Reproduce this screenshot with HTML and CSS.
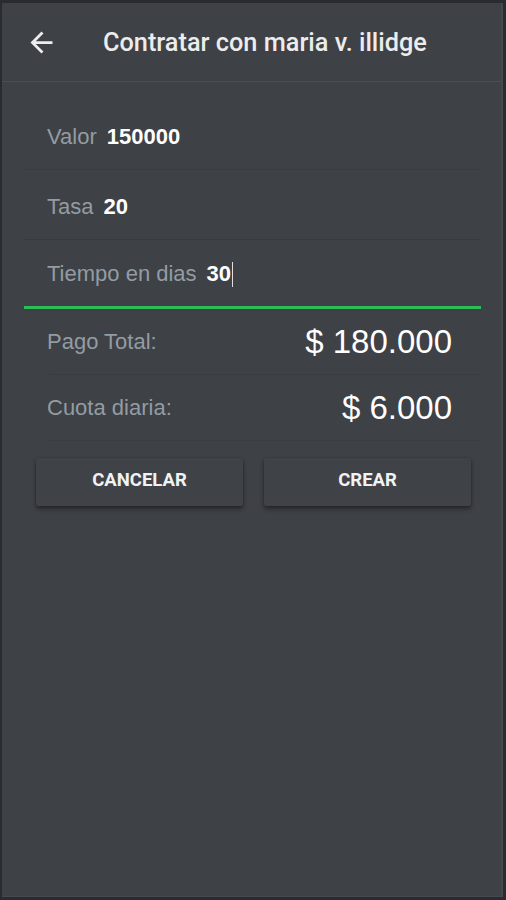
FILE: index.html
```html
<!DOCTYPE html>
<html lang="es">
<head>
<meta charset="utf-8">
<title>Contratar</title>
<link rel="stylesheet" href="styles.css">
</head>
<body>
<div class="app">
  <header class="topbar">
    <svg class="back" width="33" height="33" viewBox="0 0 24 24"><path d="M20 11H7.83l5.59-5.59L12 4l-8 8 8 8 1.41-1.41L7.83 13H20v-2z" fill="#eeeeee"/></svg>
    <h1 class="title">Contratar con maria v. illidge</h1>
  </header>
  <div class="form">
    <div class="field"><span class="label">Valor</span><span class="value">150000</span></div>
    <div class="field"><span class="label">Tasa</span><span class="value">20</span></div>
    <div class="field active"><span class="label">Tiempo en dias</span><span class="value">30<span class="caret"></span></span></div>
    <div class="result"><span class="label">Pago Total:</span><span class="amount">$ 180.000</span></div>
    <div class="result"><span class="label">Cuota diaria:</span><span class="amount">$ 6.000</span></div>
    <div class="actions">
      <button class="btn">CANCELAR</button>
      <button class="btn">CREAR</button>
    </div>
  </div>
</div>
</body>
</html>
```
FILE: styles.css
```css
html, body {
  margin: 0;
  padding: 0;
  background: #2a2b2e;
}
.app {
  box-sizing: border-box;
  margin: 3px 3px 3px 2px;
  height: 894px;
  background: #3e4146;
  border-right: 2px solid #45484d;
  border-bottom: 1px solid #45484d;
}
.topbar {
  display: flex;
  align-items: center;
  border-bottom: 1px solid #4b4e53;
  box-sizing: border-box;
  height: 79px;
  padding-left: 23px;
}
.back {
  width: 33px;
  height: 33px;
  margin-top: 1px;
}
.title {
  margin: 0 0 0 45px;
  font-family: Roboto, "Liberation Sans", sans-serif;
  font-weight: 500;
  font-size: 25.3px;
  color: #ececec;
  letter-spacing: 0;
}
.form {
  padding: 18px 20px 0 22px;
}
.field {
  border-bottom: 1px solid #383b40;
  display: flex;
  align-items: center;
  padding-left: 23px;
  padding-top: 4px;
  box-sizing: border-box;
  height: 70px;
}
.field.active {
  height: 69px;
  border-bottom: 3px solid #2dbd58;
  padding-top: 2px;
}
.label {
  color: #939ca2;
  font-family: "Liberation Sans", Arial, sans-serif;
  font-size: 22px;
}
.value {
  color: #ffffff;
  font-family: "Liberation Sans", Arial, sans-serif;
  font-weight: bold;
  font-size: 22px;
  margin-left: 10px;
  display: inline-flex;
  align-items: center;
}
.caret {
  display: inline-block;
  width: 1px;
  height: 25px;
  background: #e0e0e0;
  margin-left: 1px;
}
.result {
  height: 66px;
  box-sizing: border-box;
  border-bottom: 1px solid #393c41;
  display: flex;
  align-items: center;
  justify-content: space-between;
  padding-right: 29px;
  margin-left: 25px;
}
.result .label {
  margin-left: -2px;
}
.amount {
  font-family: "Liberation Sans", Arial, sans-serif;
  font-size: 33px;
  color: #ffffff;
}
.actions {
  display: flex;
  gap: 21px;
  padding: 17px 10px 0 12px;
}
.btn {
  flex: 1;
  height: 48px;
  border: none;
  border-radius: 2px;
  background: #3f4247;
  box-shadow: 0 3px 4px rgba(0,0,0,0.4), 0 0 2px rgba(0,0,0,0.2);
  color: #f2f2f2;
  font-family: Roboto, "Liberation Sans", sans-serif;
  font-weight: 700;
  font-size: 18.5px;
  letter-spacing: 0;
  padding: 0 0 5px 0;
}
```
